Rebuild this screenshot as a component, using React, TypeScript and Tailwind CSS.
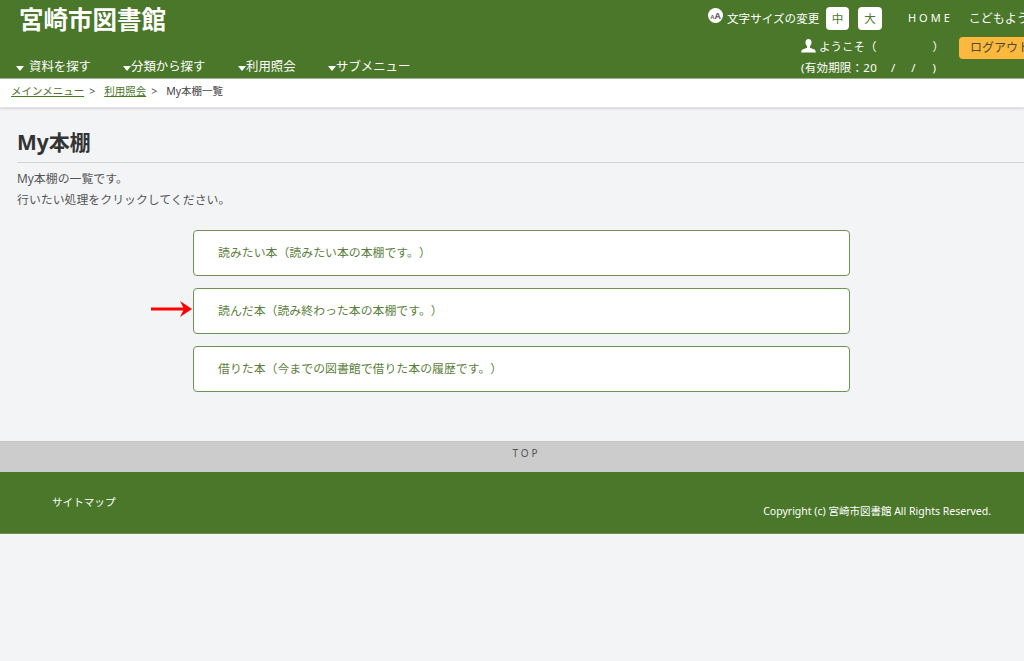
import React from "react";

const font = { fontFamily: '"Noto Sans", "Noto Sans CJK JP", sans-serif' };

function NavItem({ label, className }: { label: string; className: string }) {
  return (
    <div className={`flex items-center ${className}`}>
      <svg width="8" height="5" viewBox="0 0 8 5" className="mt-[3px] shrink-0"><path d="M0 0h8L4 5z" fill="#fff" /></svg>
      <span>{label}</span>
    </div>
  );
}

function BigLink({ label }: { label: string }) {
  return (
    <div className="flex h-[46px] items-center rounded-[4px] border border-[#6f9158] bg-white pl-[24px] text-[11.9px] text-[#5c7f3c] [text-spacing-trim:space-all]">
      {label}
    </div>
  );
}

export default function App() {
  return (
    <div className="min-h-[661px] w-[1024px] overflow-hidden bg-[#f3f4f6] text-[#333]" style={font}>
      <header className="flex h-[79px] border-b border-[#9fb58f] bg-[#4a7729] text-white">
        <div className="w-[690px] shrink-0">
          <h1 className="ml-[19px] mt-[3px] h-[41px] text-[24.5px] font-bold leading-[34px]">宮崎市図書館</h1>
          <nav className="mt-[13px] flex text-[12.4px] leading-[20px]">
            <NavItem label="資料を探す" className="ml-[16px] w-[107px] gap-[5px]" />
            <NavItem label="分類から探す" className="w-[115px]" />
            <NavItem label="利用照会" className="w-[90px]" />
            <NavItem label="サブメニュー" className="" />
          </nav>
        </div>
        <div className="w-[334px] shrink-0 overflow-hidden">
          <div className="mt-[7px] flex h-[23px] w-[400px] items-center text-[11.6px]">
            <svg width="15" height="15" viewBox="0 0 15 15" className="mb-[7px] ml-[18px] shrink-0">
              <circle cx="7.5" cy="7.5" r="7.5" fill="#fff" />
              <text x="4.5" y="10.5" textAnchor="middle" fontSize="5.5" fontWeight="700" fill="#666">A</text>
              <text x="9.5" y="10.5" textAnchor="middle" fontSize="9" fontWeight="700" fill="#666">A</text>
            </svg>
            <span className="ml-[4px] w-[93px] whitespace-nowrap">文字サイズの変更</span>
            <span className="ml-[6px] flex h-[23px] w-[23px] items-center justify-center rounded-[4px] bg-white text-[#4a7729]">中</span>
            <span className="ml-[9px] flex h-[23px] w-[24px] items-center justify-center rounded-[4px] bg-white text-[#4a7729]">大</span>
            <span className="ml-[26px] text-[11px] tracking-[0.27em]">HOME</span>
            <span className="ml-[16px] whitespace-nowrap text-[12px]">こどもよう</span>
          </div>
          <div className="mt-[6px] flex h-[22px] items-center text-[11.5px]">
            <svg width="15" height="14" viewBox="0 0 15 14" className="mb-[3px] ml-[111px] shrink-0">
              <ellipse cx="7.5" cy="3.6" rx="3" ry="3.6" fill="#fff" />
              <path d="M6 6.5h3v2.3L14 10.8 15 13.5H0l1-2.7L6 8.8z" fill="#fff" />
            </svg>
            <span className="ml-[3px] w-[124px] shrink-0 whitespace-nowrap [text-spacing-trim:space-all]">ようこそ（<span className="ml-[56px]">）</span></span>
            <span className="ml-[16px] mt-[2px] flex h-[22px] w-[90px] shrink-0 items-center whitespace-nowrap rounded-[4px] bg-[#fdb93d] pl-[11px] text-[12px] text-[#4b4b3a]">ログアウト</span>
          </div>
          <div className="ml-[111px] mt-[1px] flex whitespace-nowrap text-[11.5px] leading-[18px]">
            <span className="tracking-[0.02em]">(有効期限：20</span>
            <span className="ml-[14px]">/</span>
            <span className="ml-[16px]">/</span>
            <span className="ml-[17px]">)</span>
          </div>
        </div>
      </header>

      <div className="flex h-[29px] items-center border-b border-[#e2e2e2] bg-white pb-[3px] pl-[11px] text-[10.5px] text-[#444] shadow-[0_1px_2px_rgba(0,0,0,0.12)]">
        <span className="text-[#4a7729] underline">メインメニュー</span>
        <span className="ml-[5px]">&gt;</span>
        <span className="ml-[9px] text-[#4a7729] underline">利用照会</span>
        <span className="ml-[5px]">&gt;</span>
        <span className="ml-[9px]">My本棚一覧</span>
      </div>

      <main className="h-[333px] pl-[17px]">
        <h2 className="flex h-[55px] items-end border-b border-[#d4d4d8] pb-[5px] text-[21px] font-bold leading-[30px] text-[#333]">My本棚</h2>
        <p className="mt-[5px] text-[11.9px] leading-[20px] text-[#555]">My本棚の一覧です。</p>
        <p className="text-[11.9px] leading-[22px] text-[#555]">行いたい処理をクリックしてください。</p>
        <div className="relative ml-[176px] mt-[20px] flex w-[657px] flex-col gap-[12px]">
          <BigLink label="読みたい本（読みたい本の本棚です。）" />
          <BigLink label="読んだ本（読み終わった本の本棚です。）" />
          <BigLink label="借りた本（今までの図書館で借りた本の履歴です。）" />
          <svg width="42" height="16" viewBox="0 0 42 16" className="absolute left-[-42px] top-[71px]">
            <path d="M0 8h36" stroke="#f00" strokeWidth="3" />
            <path d="M29 0l12 8-12 8 4-8z" fill="#f00" />
          </svg>
        </div>
      </main>

      <div className="flex h-[31px] items-center justify-center border-t border-[#c4c4c4] bg-[#cccccc] pb-[7px] pl-[29px] text-[10px] tracking-[0.3em] text-[#555]">TOP</div>
      <footer className="flex h-[62px] border-b border-[#6f9158] bg-[#4a7729] text-white">
        <span className="ml-[52px] mt-[20px] text-[10.6px] leading-[20px]">サイトマップ</span>
        <span className="ml-auto mr-[33px] mt-[29px] text-[10.5px] leading-[20px]">Copyright (c) 宮崎市図書館 All Rights Reserved.</span>
      </footer>
    </div>
  );
}
